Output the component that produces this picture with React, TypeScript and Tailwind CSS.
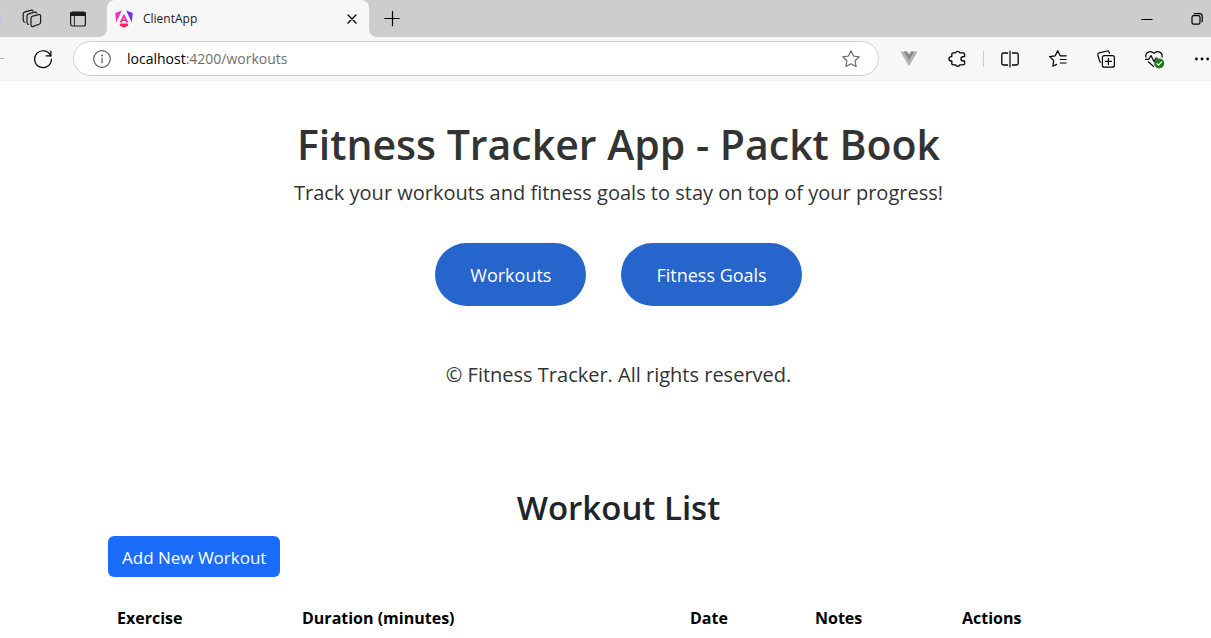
import type { ReactNode } from "react";

type IconProps = { children: ReactNode; className?: string };

function Icon({ children, className = "" }: IconProps) {
  return (
    <svg
      viewBox="0 0 20 20"
      className={`block size-5 shrink-0 ${className}`}
      fill="none"
      stroke="currentColor"
      strokeWidth="1.2"
      strokeLinecap="round"
      strokeLinejoin="round"
      aria-hidden="true"
    >
      {children}
    </svg>
  );
}

function IconButton({ label, children, className = "" }: { label: string; children: ReactNode; className?: string }) {
  return (
    <button type="button" aria-label={label} className={`flex shrink-0 items-center justify-center text-[#1b1b1b] ${className}`}>
      {children}
    </button>
  );
}

function AngularLogo() {
  return (
    <svg viewBox="0 0 18 18" className="block size-[18px] shrink-0" aria-hidden="true">
      <defs>
        <linearGradient id="ngLeft" x1="0" y1="0" x2="1" y2="1">
          <stop offset="0" stopColor="#e62ee0" />
          <stop offset="1" stopColor="#f5318f" />
        </linearGradient>
        <linearGradient id="ngMid" x1="0" y1="1" x2="1" y2="0">
          <stop offset="0" stopColor="#f0287a" />
          <stop offset="1" stopColor="#c23af0" />
        </linearGradient>
      </defs>
      <path d="M0.3 3 L6.8 0.4 L1.2 12.6 Z" fill="url(#ngLeft)" />
      <path d="M17.7 3 L11.2 0.4 L16.8 12.6 Z" fill="#7b2cf0" />
      <path d="M9 3.8 L13.4 12.6 H10.9 L10.2 11 H7.8 L7.1 12.6 H4.6 Z M9 7.4 L8.2 9.7 H9.8 Z" fill="url(#ngMid)" fillRule="evenodd" />
      <path d="M5.4 13.6 H12.6 L13.4 15.4 L9 17.8 L4.6 15.4 Z" fill="#f5205c" />
    </svg>
  );
}

function TabStrip() {
  return (
    <div className="flex h-[37px] bg-[#cdcdcd]">
      <div className="flex flex-1 bg-[#cdcdcd]">
        <div className="flex w-[107px] shrink-0 items-center">
          <span className="h-2.5 w-0.5 rounded-r-full bg-[#c3c3dc]" />
          <IconButton label="Workspaces" className="ml-5">
            <Icon>
              <path d="M10.8 7.2 L16.6 5.6 Q18.6 5.2 18.6 7 V13 Q18.6 14.6 17.2 15.2 L11.2 17.4 Q9 18 9 15.8 V9.4 Q9 7.7 10.8 7.2 Z" />
              <path d="M6.4 15.4 Q5 15 5 13.4 V7 Q5 5.3 6.8 4.8 L12.6 3.2 Q14.4 2.8 14.8 4.2" />
              <path d="M2.8 13.2 Q1.2 12.6 1.2 11 V5 Q1.2 3.4 3 2.9 L8.8 1.3 Q10.4 0.9 11 2" />
            </Icon>
          </IconButton>
          <IconButton label="Tab actions" className="ml-[26px]">
            <Icon>
              <rect x="2.6" y="3" width="14.8" height="14" rx="2" />
              <path d="M3 3.5 H17 V6.5 H3 Z" fill="currentColor" />
              <path d="M6.4 7 V16.6" strokeWidth="0.9" />
            </Icon>
          </IconButton>
        </div>
        <div className="relative flex w-[262px] shrink-0 items-center rounded-t-lg bg-[#f7f7f7] pr-[9px] pl-2">
          <span className="absolute bottom-0 -left-2 size-2 overflow-hidden bg-[#f7f7f7]">
            <span className="block size-full rounded-br-lg bg-[#cdcdcd]" />
          </span>
          <span className="absolute -right-2 bottom-0 size-2 overflow-hidden bg-[#f7f7f7]">
            <span className="block size-full rounded-bl-lg bg-[#cdcdcd]" />
          </span>
          <AngularLogo />
          <span className="ml-[10px] flex-1 text-xs leading-4 text-[#1b1b1b]">ClientApp</span>
          <IconButton label="Close tab" className="size-4">
            <Icon className="text-black">
              <path d="M6 6 L14 14 M14 6 L6 14" strokeWidth="1.4" />
            </Icon>
          </IconButton>
        </div>
        <IconButton label="New tab" className="ml-[13px]">
          <Icon className="text-black">
            <path d="M2.8 9.5 H17.2 M10.5 2.3 V16.7" />
          </Icon>
        </IconButton>
      </div>
      <div className="flex items-center gap-[30px] pr-1">
        <IconButton label="Minimize">
          <Icon className="text-black">
            <path d="M4.8 10.5 H15.2" strokeWidth="1" />
          </Icon>
        </IconButton>
        <IconButton label="Restore">
          <Icon className="text-black">
            <rect x="5" y="6.6" width="8" height="8.6" rx="1.6" />
            <path d="M7.2 4.6 H12.6 Q15.2 4.6 15.2 7.2 V12.6" />
          </Icon>
        </IconButton>
      </div>
    </div>
  );
}

function Toolbar() {
  return (
    <div className="flex h-11 items-center border-b border-[#ededed] bg-[#f7f7f7]">
      <span className="h-px w-1 bg-[#b5b5b5]" />
      <IconButton label="Refresh" className="ml-[29px]">
        <Icon className="text-black">
          <path d="M17.7 6.8 A8.4 8.4 0 1 0 18.4 10.2" />
          <path d="M17.9 2.2 V6.9 H13.2" />
        </Icon>
      </IconButton>
      <div className="ml-5 flex h-[35px] flex-1 items-center rounded-full border border-[#cfcfcf] bg-white pr-[17px] pl-[18px]">
        <Icon className="text-[#5c5c5c]">
          <circle cx="10" cy="10" r="8.3" />
          <path d="M10 9 V13.8" />
          <circle cx="10" cy="6.4" r="0.4" fill="currentColor" />
        </Icon>
        <span className="ml-[15px] flex-1 text-sm leading-5 text-[#6e6e6e]">
          <span className="text-black">localhost</span>:4200/workouts
        </span>
        <IconButton label="Add to favorites">
          <Icon className="text-[#6a6a6a]">
            <path d="M10 1.8 L12.5 7 L18.2 7.8 L14.1 11.8 L15.1 17.5 L10 14.8 L4.9 17.5 L5.9 11.8 L1.8 7.8 L7.5 7 Z" />
          </Icon>
        </IconButton>
      </div>
      <IconButton label="Vue devtools" className="ml-5">
        <svg viewBox="0 0 20 20" className="block size-5" aria-hidden="true">
          <path d="M1.4 2.4 H18.6 L10 17.2 Z" fill="#b4b4b4" />
          <path d="M4.8 2.4 H8 L10 5.6 L12 2.4 H15.2 L10 11.4 Z" fill="#8a8a8a" />
          <path d="M8 2.4 H12 L10 5.6 Z" fill="#f7f7f7" />
        </svg>
      </IconButton>
      <IconButton label="Extensions" className="ml-7">
        <Icon className="text-black">
          <path
            strokeWidth="1.3"
            d="M8.6 3.9 A2.2 2.2 0 0 1 12.8 3.9 H16.2 Q17.6 3.9 17.6 5.3 V7.6 H16.2 A2.2 2.2 0 0 0 16.2 12 H17.6 V14.4 Q17.6 15.8 16.2 15.8 H12.8 A2.2 2.2 0 0 1 8.6 15.8 H6.2 Q4.8 15.8 4.8 14.4 V12 H4.2 A2.2 2.2 0 0 1 4.2 7.6 H4.8 V5.3 Q4.8 3.9 6.2 3.9 Z"
          />
        </Icon>
      </IconButton>
      <span className="ml-4 h-4 w-px bg-[#cccccc]" />
      <IconButton label="Split screen" className="ml-4">
        <Icon className="text-black">
          <path d="M7.6 4 H3.6 Q1.8 4 1.8 5.8 V14.2 Q1.8 16 3.6 16 H7.6" strokeWidth="1.3" />
          <path d="M12.4 4 H16.4 Q18.2 4 18.2 5.8 V14.2 Q18.2 16 16.4 16 H12.4" strokeWidth="1.3" />
          <path d="M10 2 V18" />
        </Icon>
      </IconButton>
      <IconButton label="Favorites" className="ml-7">
        <Icon className="text-black">
          <path d="M8.6 15.4 L4.8 17.3 L5.7 11.5 L1.6 7.6 L7.2 6.8 L9.7 1.7 L12.2 6.8 H18.2" />
          <path d="M12.2 10.5 H18.2 M12.2 14 H18.2" />
        </Icon>
      </IconButton>
      <IconButton label="Collections" className="ml-7">
        <Icon className="text-black">
          <rect x="6.4" y="6.6" width="12" height="11.6" rx="2" />
          <path d="M12.4 9.4 V15.4 M9.4 12.4 H15.4" />
          <path d="M13.6 4.2 L13 3 Q12.4 1.6 11 2 L3.2 3.8 Q1.4 4.4 1.8 6 L3.6 12.2 Q4 13.2 4.6 13.2" />
        </Icon>
      </IconButton>
      <IconButton label="Browser essentials" className="ml-7">
        <Icon className="overflow-visible text-black">
          <path d="M2 8.2 C0.9 3.6 6.6 0.6 10 4.4 C13.4 0.6 19 3.6 18 8.2" />
          <path d="M1.6 10.3 H4.6 L7 6.6 L10 12.6 L12 9 H13.4" />
          <path d="M4.4 12.8 L9.4 17.4" />
          <circle cx="15.2" cy="14.4" r="5" fill="#217821" stroke="none" />
          <path d="M12.9 14.6 L14.5 16.2 L17.6 12.9" stroke="#fff" />
        </Icon>
      </IconButton>
      <IconButton label="Settings and more" className="-mr-px ml-7">
        <Icon className="text-black">
          <g fill="currentColor" stroke="none">
            <circle cx="4.4" cy="10" r="1.4" />
            <circle cx="10" cy="10" r="1.4" />
            <circle cx="15.6" cy="10" r="1.4" />
          </g>
        </Icon>
      </IconButton>
    </div>
  );
}

function App() {
  return (
    <div className="min-h-screen overflow-hidden bg-white font-['Open_Sans','Noto_Sans',sans-serif]">
      <header>
        <TabStrip />
        <Toolbar />
      </header>
      <main className="pl-[26px]">
        <section className="flex flex-col items-center pt-[35px] text-[#333333]">
          <h1 className="text-[41px] leading-14 font-semibold">Fitness Tracker App - Packt Book</h1>
          <p className="text-xl leading-[42px]">Track your workouts and fitness goals to stay on top of your progress!</p>
          <nav className="mt-[29px] flex gap-[35px] text-lg leading-[27px] text-white">
            <a href="#workouts" className="rounded-full bg-[#2665cc] px-[35px] pt-[19px] pb-[17px]">
              Workouts
            </a>
            <a href="#goals" className="rounded-full bg-[#2665cc] px-[35px] pt-[19px] pb-[17px]">
              Fitness Goals
            </a>
          </nav>
          <p className="mt-[54px] text-xl leading-[30px]">© Fitness Tracker. All rights reserved.</p>
        </section>
        <section id="workouts" className="mr-[82px] ml-[82px] pt-24">
          <h2 className="text-center text-[33px] leading-11 font-semibold text-[#212529]">Workout List</h2>
          <button type="button" className="mt-[6px] rounded-md bg-[#1a6dfb] px-[14px] pt-2 pb-[6px] text-[17px] leading-[27px] text-white">
            Add New Workout
          </button>
          <table className="mt-5 w-full table-fixed text-left">
            <colgroup>
              <col className="w-[185px]" />
              <col className="w-[38%]" />
              <col className="w-[125px]" />
              <col className="w-[147px]" />
              <col />
            </colgroup>
            <thead>
              <tr className="text-base leading-[26px] text-black">
                <th className="px-[9px] py-2 font-bold">Exercise</th>
                <th className="px-[9px] py-2 font-bold">Duration (minutes)</th>
                <th className="px-[9px] py-2 font-bold">Date</th>
                <th className="px-[9px] py-2 font-bold">Notes</th>
                <th className="px-[9px] py-2 font-bold">Actions</th>
              </tr>
            </thead>
          </table>
        </section>
      </main>
    </div>
  );
}

export default App;
